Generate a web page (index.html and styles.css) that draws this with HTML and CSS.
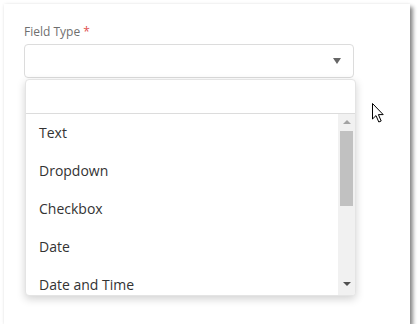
FILE: index.html
```html
<!doctype html>
<html>
    <head>
        <title>Field Type</title>
        <link rel="stylesheet" href="styles.css">
    </head>
    <body>
        <div class="card">
            <label class="field-label">Field Type<span class="required">*</span></label>

            <div class="select">
                <span class="select-value"></span>
                <span class="select-arrow"></span>
            </div>

            <div class="dropdown">
                <div class="dropdown-search"></div>
                <div class="dropdown-body">
                    <ul class="options">
                        <li>Text</li>
                        <li>Dropdown</li>
                        <li>Checkbox</li>
                        <li>Date</li>
                        <li>Date and Time</li>
                    </ul>
                    <div class="scrollbar">
                        <span class="scroll-up"></span>
                        <span class="scroll-thumb"></span>
                        <span class="scroll-down"></span>
                    </div>
                </div>
            </div>

            <svg class="cursor" width="14" height="22" viewBox="0 0 14 22">
                <path d="M1.5 1.5 L1.5 17 L5 13.6 L7.8 20 L10.2 19 L7.4 12.6 L12.2 12.6 Z" fill="#fff" stroke="#000" stroke-width="1" stroke-linejoin="miter"/>
            </svg>
        </div>
    </body>
</html>
```

FILE: styles.css
```css
:root {
    font-family: 'Open Sans', 'Liberation Sans', sans-serif;

    --text: #333333;
    --label: #6f6f6f;
    --required: #e0504f;
    --border: #dcdcdc;
    --track: #f1f1f1;
    --thumb: #c1c1c1;
}

body {
    margin: 0;
    background: #ffffff;
}

.card {
    position: relative;
    margin: 4px 0 0 4px;
    width: 406px;
    height: 320px;
    box-sizing: border-box;
    padding: 20px 56px 0 20px;
    background: #ffffff;
    box-shadow: 0 0 3px rgba(0, 0, 0, 0.08), 3px 3px 4px rgba(0, 0, 0, 0.45);
}

.field-label {
    display: block;
    font-size: 12px;
    line-height: 16px;
    height: 20px;
    color: var(--label);
}

.required {
    color: var(--required);
    margin-left: 3px;
}

.select {
    display: flex;
    align-items: center;
    justify-content: flex-end;
    height: 34px;
    box-sizing: border-box;
    border: 1px solid var(--border);
    border-radius: 4px;
    padding-right: 12px;
}

.select-value {
    flex: 1;
}

.select-arrow {
    width: 0;
    height: 0;
    border-left: 4px solid transparent;
    border-right: 4px solid transparent;
    border-top: 6px solid #666666;
}

.dropdown {
    margin: 1px 0 0 1px;
    width: 331px;
    height: 217px;
    box-sizing: border-box;
    border: 1px solid #e4e4e4;
    border-radius: 4px;
    background: #ffffff;
    box-shadow: 0 3px 8px rgba(0, 0, 0, 0.18);
    display: flex;
    flex-direction: column;
    overflow: hidden;
}

.dropdown-search {
    height: 33px;
    border-bottom: 1px solid var(--border);
    flex: none;
}

.dropdown-body {
    flex: 1;
    display: flex;
    min-height: 0;
}

.options {
    list-style: none;
    margin: 0;
    padding: 0;
    flex: 1;
    overflow: hidden;
}

.options li {
    height: 38px;
    line-height: 38px;
    padding-left: 13px;
    font-size: 14px;
    color: var(--text);
}

.scrollbar {
    width: 17px;
    background: var(--track);
    display: flex;
    flex-direction: column;
    align-items: center;
}

.scroll-up,
.scroll-down {
    width: 0;
    height: 0;
    border-left: 4px solid transparent;
    border-right: 4px solid transparent;
}

.scroll-up {
    margin-top: 6px;
    border-bottom: 4px solid #a3a3a3;
}

.scroll-thumb {
    margin-top: 7px;
    width: 13px;
    height: 75px;
    background: var(--thumb);
}

.scroll-down {
    margin-top: auto;
    margin-bottom: 9px;
    border-top: 4px solid #505050;
}

.cursor {
    position: absolute;
    left: 367px;
    top: 98px;
}
```
